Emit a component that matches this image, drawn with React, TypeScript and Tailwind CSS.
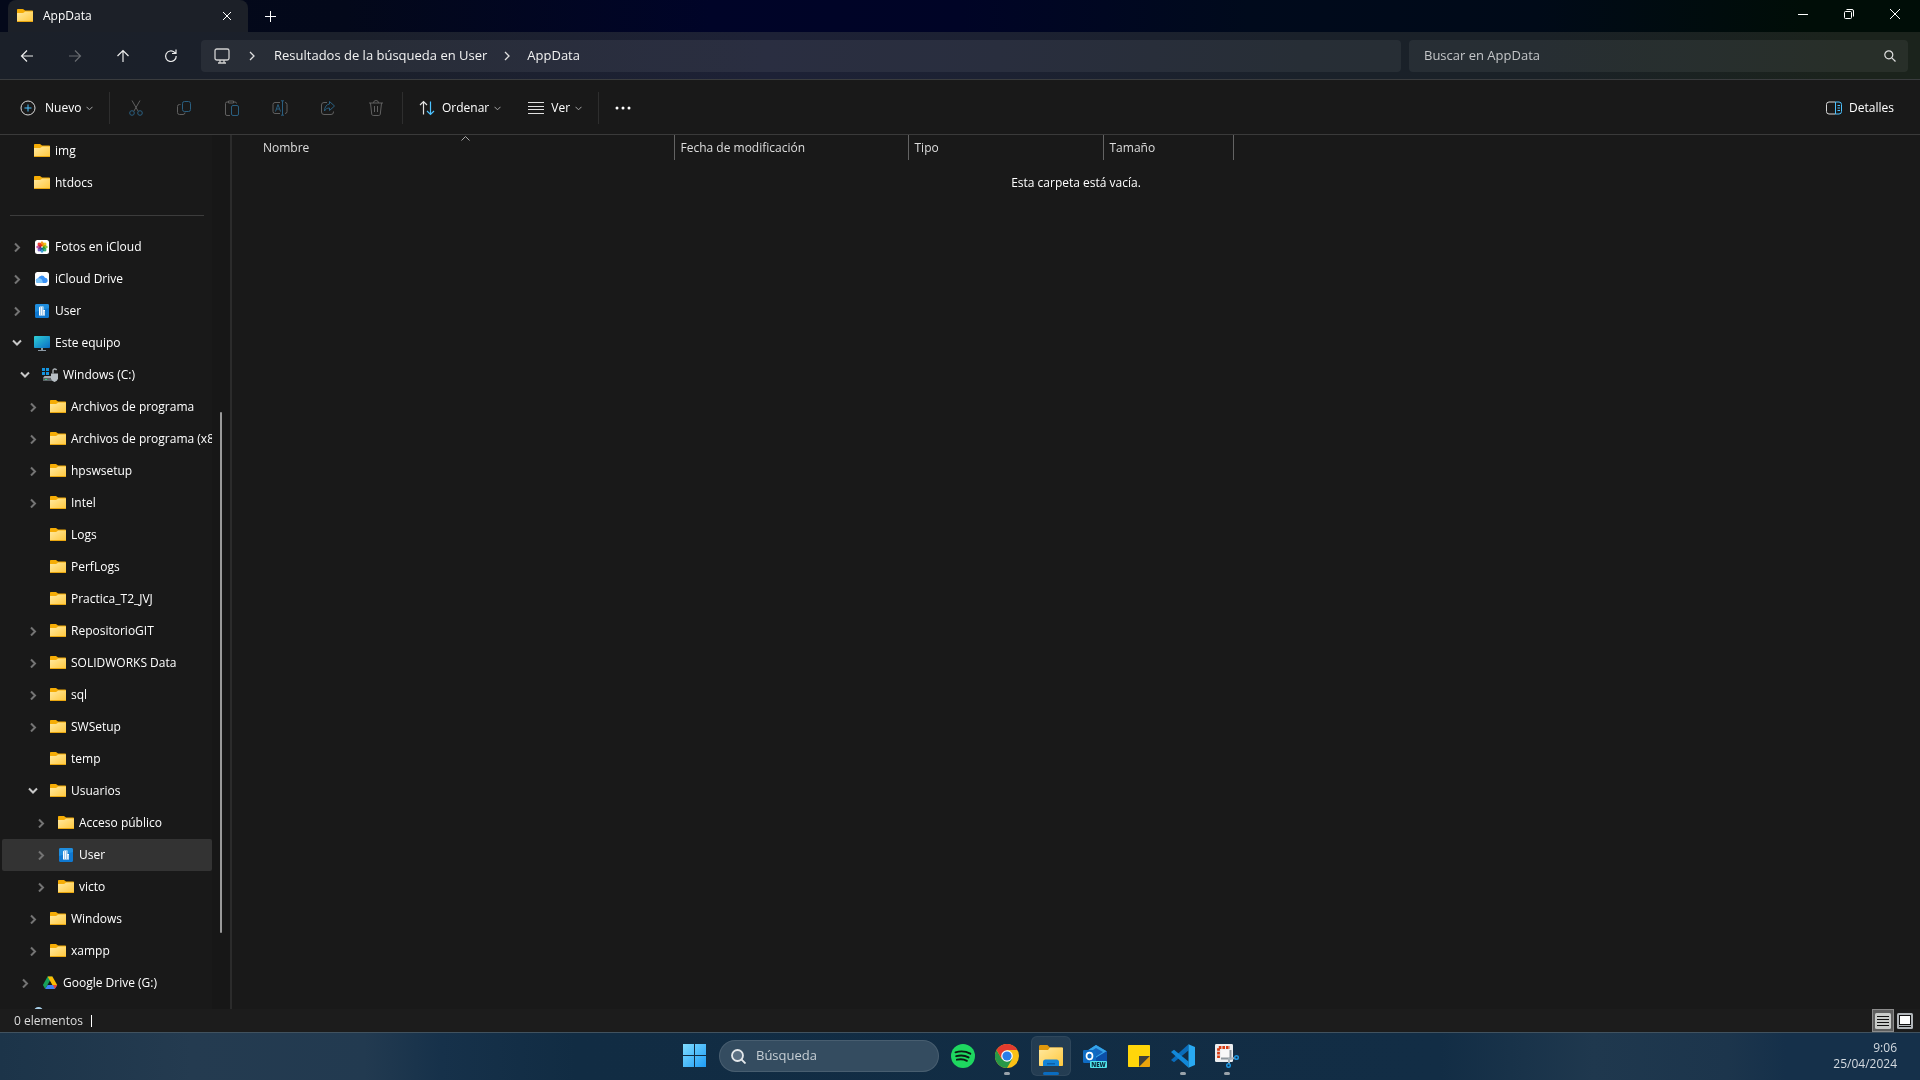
import type { ReactNode } from "react";

type IconName = "folder" | "photos" | "cloud" | "user" | "pc" | "drive" | "gdrive" | "network";

type TreeItem = {
  label: string;
  icon: IconName;
  depth: number;
  state?: "open" | "closed";
  selected?: boolean;
};

const PINNED: TreeItem[] = [
  { label: "img", icon: "folder", depth: 0 },
  { label: "htdocs", icon: "folder", depth: 0 },
];

const TREE: TreeItem[] = [
  { label: "Fotos en iCloud", icon: "photos", depth: 0, state: "closed" },
  { label: "iCloud Drive", icon: "cloud", depth: 0, state: "closed" },
  { label: "User", icon: "user", depth: 0, state: "closed" },
  { label: "Este equipo", icon: "pc", depth: 0, state: "open" },
  { label: "Windows (C:)", icon: "drive", depth: 1, state: "open" },
  { label: "Archivos de programa", icon: "folder", depth: 2, state: "closed" },
  { label: "Archivos de programa (x86)", icon: "folder", depth: 2, state: "closed" },
  { label: "hpswsetup", icon: "folder", depth: 2, state: "closed" },
  { label: "Intel", icon: "folder", depth: 2, state: "closed" },
  { label: "Logs", icon: "folder", depth: 2 },
  { label: "PerfLogs", icon: "folder", depth: 2 },
  { label: "Practica_T2_JVJ", icon: "folder", depth: 2 },
  { label: "RepositorioGIT", icon: "folder", depth: 2, state: "closed" },
  { label: "SOLIDWORKS Data", icon: "folder", depth: 2, state: "closed" },
  { label: "sql", icon: "folder", depth: 2, state: "closed" },
  { label: "SWSetup", icon: "folder", depth: 2, state: "closed" },
  { label: "temp", icon: "folder", depth: 2 },
  { label: "Usuarios", icon: "folder", depth: 2, state: "open" },
  { label: "Acceso público", icon: "folder", depth: 3, state: "closed" },
  { label: "User", icon: "user", depth: 3, state: "closed", selected: true },
  { label: "victo", icon: "folder", depth: 3, state: "closed" },
  { label: "Windows", icon: "folder", depth: 2, state: "closed" },
  { label: "xampp", icon: "folder", depth: 2, state: "closed" },
  { label: "Google Drive (G:)", icon: "gdrive", depth: 1, state: "closed" },
];

const INDENT = ["pl-1.5", "pl-3.5", "pl-[22px]", "pl-[30px]"];

/* ---------- tree icons ---------- */

function FolderIcon() {
  return (
    <svg width="16" height="16" viewBox="0 0 16 16" className="shrink-0">
      <defs>
        <linearGradient id="folder" x1="0" y1="0" x2="1" y2="1">
          <stop offset="0" stopColor="#ffe9a0" />
          <stop offset="1" stopColor="#ffc83d" />
        </linearGradient>
      </defs>
      <path d="M0 2C0 1.400.5 1 1 1h4.600c.5 0 .9.200 1.200.500L8 2.500h7c.6 0 1 .4 1 1V8H0z" fill="#f5ac05" />
      <path d="M0 5h5.800c.5 0 .9-.2 1.200-.5L8 3.500h8v9.700c0 .5-.4.8-.8.8H.8c-.4 0-.8-.3-.8-.8z" fill="url(#folder)" />
      <path d="M0 13h16c0 .6-.4 1-1 1H1c-.6 0-1-.4-1-1z" fill="#e9a60f" />
    </svg>
  );
}

const PETALS = ["#f7941d", "#f5c518", "#8cc63f", "#39b577", "#3f9fd8", "#7b68c8", "#c958a0", "#ee4036"];

function TreeIcon({ name }: { name: IconName }) {
  if (name === "folder") return <FolderIcon />;
  if (name === "photos")
    return (
      <svg width="16" height="16" viewBox="0 0 16 16" className="shrink-0">
        <rect x="1" y="1" width="14" height="14" rx="2.500" fill="#fff" />
        {PETALS.map((c, i) => (
          <ellipse
            key={c}
            cx="8"
            cy="4.800"
            rx="1.700"
            ry="2.600"
            fill={c}
            className="mix-blend-multiply"
            transform={`rotate(${i * 45} 8 8)`}
          />
        ))}
      </svg>
    );
  if (name === "cloud")
    return (
      <svg width="16" height="16" viewBox="0 0 16 16" className="shrink-0">
        <rect x="1" y="1" width="14" height="14" rx="2.500" fill="#fff" />
        <path d="M4 12a2.200 2.200 0 0 1 0-4.400A3.700 3.700 0 0 1 11 6.800 2.700 2.700 0 0 1 12 12z" fill="#3b93f7" />
        <path d="M4 12a2.200 2.200 0 0 1 0-4.400c2-.8 4 .4 4.400 2.400L9 12z" fill="#7cc5fb" />
      </svg>
    );
  if (name === "user")
    return (
      <svg width="16" height="16" viewBox="0 0 16 16" className="shrink-0">
        <rect x="1" y="1" width="14" height="14" rx="1.500" fill="#0f78d0" />
        <path d="M1 2.500C1 1.700 1.700 1 2.500 1h11c.8 0 1.500.7 1.500 1.500V5L1 9z" fill="#2a9be6" fillOpacity="0.600" />
        <path d="M5 4.500L6 3.500h3.500V7H11v5.500H5z" fill="#fff" />
        <path
          d="M6.200 5h.9M8.200 5h.9M6.200 7h.9M8.200 7h.9M6.200 9h.9M8.200 9h.9M6.200 11h.9M8.200 11h.9M9.800 9h.7M9.800 11h.7"
          stroke="#1478cc"
        />
      </svg>
    );
  if (name === "pc")
    return (
      <svg width="16" height="16" viewBox="0 0 16 16" className="shrink-0">
        <defs>
          <linearGradient id="pc" x1="0" y1="0" x2="1" y2="1">
            <stop offset="0" stopColor="#2fd0d6" />
            <stop offset="1" stopColor="#0a6cc4" />
          </linearGradient>
        </defs>
        <rect x="0" y="1" width="16" height="12" rx="0.800" fill="url(#pc)" />
        <path d="M7 13h2v2h3v1H4v-1h3z" fill="#8d9aa5" />
      </svg>
    );
  if (name === "drive")
    return (
      <svg width="16" height="16" viewBox="0 0 16 16" className="shrink-0">
        <path d="M0 1h3v3H0zM4 1h3v3H4zM0 5h3v3H0zM4 5h3v3H4z" fill="#1595e0" />
        <path d="M1 11l1.500-2H14v3H1z" fill="#a4aaae" />
        <path d="M1 11h14v3H1z" fill="#5c6367" />
        <path d="M3 12h2v1H3z" fill="#34d47a" />
        <path d="M11 6.500V3.500c0-1.600 2.800-2.200 3.600-.4" stroke="#a9afb3" strokeWidth="1.400" fill="none" />
        <path d="M9 6.500h7v5c0 1-1.200 2.500-3.500 3.500C10.200 14 9 12.500 9 11.500z" fill="#b7bec4" />
      </svg>
    );
  if (name === "gdrive")
    return (
      <svg width="16" height="16" viewBox="0 0 16 16" className="shrink-0">
        <path d="M5.600 1.500h4.800L8 5.600 3.200 14 .9 10z" fill="#18a05a" />
        <path d="M5.600 1.500h4.800L15.200 10h-4.800z" fill="#fbbc04" />
        <path d="M3.200 14 5.600 10h9.600L12.800 14z" fill="#3f83f5" />
        <path d="M10.900 10h4.300L12.800 14z" fill="#ea4335" />
      </svg>
    );
  return (
    <svg width="16" height="16" viewBox="0 0 16 16" className="shrink-0">
      <circle cx="4.500" cy="4.500" r="4.500" fill="#a8d0ea" />
      <path d="M5 6h11v8H5z" fill="#1b86d0" />
    </svg>
  );
}

function TreeRow({ item }: { item: TreeItem }) {
  return (
    <li className="shrink-0">
      <button
        type="button"
        className={`flex h-8 w-full items-center overflow-hidden rounded-xs ${INDENT[item.depth]} ${item.selected ? "bg-[#333333]" : ""}`}
      >
        <span className="flex w-[17px] shrink-0 justify-center">
          {item.state === "open" && (
            <svg width="10" height="10" viewBox="0 0 10 10" fill="none" stroke="#c8c8c8" strokeWidth="2">
              <path d="M1 2.500l4 4 4-4" />
            </svg>
          )}
          {item.state === "closed" && (
            <svg width="10" height="10" viewBox="0 0 10 10" fill="none" stroke="#747474" strokeWidth="2">
              <path d="M3 1.500l4 4-4 4" />
            </svg>
          )}
        </span>
        <span className="mr-[5px] ml-[9px]">
          <TreeIcon name={item.icon} />
        </span>
        <span className="whitespace-nowrap">{item.label}</span>
      </button>
    </li>
  );
}

/* ---------- window chrome ---------- */

function TitleBar() {
  return (
    <header className="flex h-8 shrink-0 items-center bg-[linear-gradient(90deg,#04091a_0%,#03081a_18%,#000428_37%,#000426_50%,#000a1c_65%,#000a18_80%,#000d07_94%)] pr-0.5 pl-2">
      <div className="flex h-full w-60 items-center rounded-t-lg bg-[#1c2028] pr-4 pl-[9px]">
        <FolderIcon />
        <span className="ml-2.5 flex-1 text-xs text-white">AppData</span>
        <button type="button" aria-label="Cerrar pestaña" className="text-white">
          <svg width="10" height="10" viewBox="0 0 10 10" stroke="currentColor">
            <path d="M1 1l8 8M9 1L1 9" />
          </svg>
        </button>
      </div>
      <button type="button" aria-label="Nueva pestaña" className="flex h-8 w-11 items-center justify-center text-white">
        <svg width="11" height="11" viewBox="0 0 11 11" stroke="currentColor">
          <path d="M5.500 0v11M0 5.500h11" />
        </svg>
      </button>
      <div className="ml-auto flex pb-1 text-white">
        <button type="button" aria-label="Minimizar" className="flex h-7 w-[46px] items-center justify-center">
          <svg width="10" height="10" viewBox="0 0 10 10" stroke="currentColor">
            <path d="M0 5.500h10" />
          </svg>
        </button>
        <button type="button" aria-label="Restaurar" className="flex h-7 w-[46px] items-center justify-center">
          <svg width="10" height="10" viewBox="0 0 10 10" fill="none" stroke="currentColor">
            <rect x="0.500" y="2.500" width="7" height="7" rx="1" />
            <path d="M2.500.5H8A1.500 1.500 0 0 1 9.500 2v5.500" />
          </svg>
        </button>
        <button type="button" aria-label="Cerrar" className="flex h-7 w-[46px] items-center justify-center">
          <svg width="10" height="10" viewBox="0 0 10 10" stroke="currentColor">
            <path d="M0 0l10 10M10 0L0 10" />
          </svg>
        </button>
      </div>
    </header>
  );
}

function NavButton({ label, dim, children }: { label: string; dim?: boolean; children: ReactNode }) {
  return (
    <button
      type="button"
      aria-label={label}
      disabled={dim}
      className={`flex size-8 items-center justify-center ${dim ? "text-[#686b70]" : "text-[#ececec]"}`}
    >
      <svg width="16" height="16" viewBox="0 0 16 16" fill="none" stroke="currentColor" strokeWidth="1.200">
        {children}
      </svg>
    </button>
  );
}

function CrumbArrow() {
  return (
    <svg width="6" height="10" viewBox="0 0 6 10" fill="none" stroke="#e0e0e0" strokeWidth="1.300" className="shrink-0">
      <path d="M1 1l4 4-4 4" />
    </svg>
  );
}

function AddressBar() {
  return (
    <div className="flex h-12 shrink-0 items-center border-b border-[#3a3c3e] bg-[linear-gradient(90deg,#1b2029_0%,#1b202b_18%,#1d2136_40%,#1c2132_52%,#1a212a_68%,#1a2127_80%,#1b231c_96%)] pt-px pr-3 pl-[11px]">
      <nav className="flex gap-4 pr-3.5" aria-label="Historial">
        <NavButton label="Atrás">
          <path d="M14 8H2.500M8 2.500L2.500 8 8 13.500" />
        </NavButton>
        <NavButton label="Adelante" dim>
          <path d="M2 8h11.500M8 2.500L13.500 8 8 13.500" />
        </NavButton>
        <NavButton label="Subir">
          <path d="M8 14V2.500M2.500 8L8 2.500 13.500 8" />
        </NavButton>
        <NavButton label="Actualizar">
          <path d="M13.200 8A5.300 5.300 0 1 1 11.500 4.300L13 5.500M13 1.500v4H9" />
        </NavButton>
      </nav>
      <div className="flex h-8 flex-1 items-center rounded-sm bg-white/6 pl-[13px] text-[13px] text-[#f2f2f2]">
        <svg width="16" height="16" viewBox="0 0 16 16" fill="none" stroke="#d0d0d0" strokeWidth="1.300">
          <rect x="1" y="1" width="14" height="11" rx="1.800" />
          <path d="M6 12v2.500M10 12v2.500M4 15h8" />
        </svg>
        <span className="flex w-11 justify-center">
          <CrumbArrow />
        </span>
        <a href="#resultados">Resultados de la búsqueda en User</a>
        <span className="flex w-10 justify-center">
          <CrumbArrow />
        </span>
        <a href="#appdata">AppData</a>
      </div>
      <label className="ml-2 flex h-8 w-[499px] items-center rounded-sm bg-white/6 pr-3 pl-[15px]">
        <input
          type="text"
          aria-label="Buscar en AppData"
          placeholder="Buscar en AppData"
          className="min-w-0 flex-1 bg-transparent text-[13px] text-white outline-none placeholder:text-[#c4c6c8]"
        />
        <svg width="12" height="12" viewBox="0 0 12 12" fill="none" stroke="#e0e0e0" strokeWidth="1.200">
          <circle cx="4.800" cy="4.800" r="4" />
          <path d="M7.800 7.800L11.500 11.500" />
        </svg>
      </label>
    </div>
  );
}

function Caret() {
  return (
    <svg width="7" height="5" viewBox="0 0 7 5" fill="none" stroke="#a8a8a8" className="ml-[5px]">
      <path d="M.5.800l3 3 3-3" />
    </svg>
  );
}

function Divider() {
  return <span className="h-8 w-px bg-[#2e2e2e]" />;
}

function Tool({ label, children }: { label: string; children: ReactNode }) {
  return (
    <button type="button" aria-label={label} disabled className="flex h-8 w-12 items-center justify-center">
      <svg width="16" height="16" viewBox="0 0 16 16" fill="none" stroke="#606060">
        {children}
      </svg>
    </button>
  );
}

function Toolbar() {
  return (
    <div className="flex h-[55px] shrink-0 items-center border-b border-[#3a3a3a] bg-[#191919] pt-0.5 pr-[26px] text-xs text-white">
      <button type="button" className="flex w-[109px] items-center pl-5">
        <svg width="16" height="16" viewBox="0 0 16 16" fill="none" stroke="#d8d8d8">
          <circle cx="8" cy="8" r="7" />
          <path d="M8 4.500v7M4.500 8h7" stroke="#4cc2ff" />
        </svg>
        <span className="ml-[9px]">Nuevo</span>
        <Caret />
      </button>
      <Divider />
      <div className="flex px-0.5">
        <Tool label="Cortar">
          <path d="M4 .5l6.200 10.800M12 .5L5.800 11.300" />
          <circle cx="4" cy="13" r="2.300" stroke="#2a5f80" />
          <circle cx="12" cy="13" r="2.300" stroke="#2a5f80" />
        </Tool>
        <Tool label="Copiar">
          <path d="M4.500 4.500H3.500a2 2 0 0 0-2 2v6a2 2 0 0 0 2 2h3.500a2 2 0 0 0 2-2" />
          <rect x="6.500" y="1.500" width="8" height="10" rx="2" stroke="#2a5f80" />
        </Tool>
        <Tool label="Pegar">
          <path d="M6 15.500H3A1.500 1.500 0 0 1 1.500 14V3.500A1.500 1.500 0 0 1 3 2h1.500M9.500 2H11A1.500 1.500 0 0 1 12.500 3.500M4.500 1h5v2h-5z" />
          <rect x="7.500" y="5.500" width="7" height="10" rx="1.500" stroke="#2a5f80" />
        </Tool>
        <Tool label="Cambiar nombre">
          <path d="M8 2.500H3a2 2 0 0 0-2 2v7a2 2 0 0 0 2 2h5M13 2.500a2 2 0 0 1 2 2v7a2 2 0 0 1-2 2" />
          <path d="M3.500 11.500L6 4.500l2.500 7M4.500 9h3M10.500 1v14M9 .8h3M9 15.200h3" stroke="#2a5f80" />
        </Tool>
        <Tool label="Compartir">
          <path d="M7 2.500H4a2.500 2.500 0 0 0-2.500 2.500v7A2.500 2.500 0 0 0 4 14.500h7a2.500 2.500 0 0 0 2.500-2.500v-.5" />
          <path d="M9.500 1.500l5 4.500-5 4.500V8C7 8 5.500 9 4.500 11c0-4 2-6.500 5-7z" stroke="#2a5f80" />
        </Tool>
        <Tool label="Eliminar">
          <path d="M1 3h14M5.500 3a2.500 2.500 0 0 1 5 0M2.500 3l1.200 11c.1.900.7 1.500 1.500 1.500h5.600c.8 0 1.400-.6 1.500-1.500L13.500 3M6.500 6v6M9.500 6v6" />
        </Tool>
      </div>
      <Divider />
      <button type="button" className="flex items-center pl-4">
        <svg width="16" height="16" viewBox="0 0 16 16" fill="none" strokeWidth="1.200">
          <path d="M4.500 14.500V1.500M1 5l3.500-3.500L8 5" stroke="#e0e0e0" />
          <path d="M11.500 1.500v13M8 11l3.500 3.500L15 11" stroke="#4cc2ff" />
        </svg>
        <span className="ml-[7px]">Ordenar</span>
        <Caret />
      </button>
      <button type="button" className="ml-[27px] flex items-center pr-4">
        <svg width="16" height="16" viewBox="0 0 16 16" stroke="#e0e0e0">
          <path d="M0 2.500h16M0 6.500h16M0 9.500h16M0 13.500h16" />
        </svg>
        <span className="ml-[7px]">Ver</span>
        <Caret />
      </button>
      <Divider />
      <button type="button" aria-label="Ver más" className="flex h-8 w-12 items-center justify-center">
        <svg width="16" height="4" viewBox="0 0 16 4" fill="#fff">
          <circle cx="2" cy="2" r="1.500" />
          <circle cx="8" cy="2" r="1.500" />
          <circle cx="14" cy="2" r="1.500" />
        </svg>
      </button>
      <button type="button" className="ml-auto flex items-center">
        <svg width="16" height="14" viewBox="0 0 16 14" fill="none">
          <path d="M9.500 1H3A2.500 2.500 0 0 0 .5 3.500v7A2.500 2.500 0 0 0 3 13h6.500" stroke="#d8d8d8" />
          <path d="M9.500 1H13a2.500 2.500 0 0 1 2.500 2.500v7A2.500 2.500 0 0 1 13 13H9.500zM11.500 4.500h2.500M11.500 7h2.500M11.500 9.500h2.500" stroke="#4cc2ff" />
        </svg>
        <span className="ml-[7px]">Detalles</span>
      </button>
    </div>
  );
}

/* ---------- body ---------- */

function Sidebar() {
  return (
    <aside className="flex w-[232px] shrink-0 border-r-2 border-[#2b2b2b] bg-[#191919] pl-0.5 text-xs text-white">
      <ul className="flex w-[210px] flex-col overflow-hidden">
        {PINNED.map((item) => (
          <TreeRow key={item.label} item={item} />
        ))}
        <li className="flex h-8 shrink-0 items-center px-2">
          <hr className="w-full border-[#3c3c3c]" />
        </li>
        {TREE.map((item, i) => (
          <TreeRow key={i} item={item} />
        ))}
        {/* next root node, only its top edge shows above the status bar */}
        <li className="flex h-8 shrink-0 items-center pl-8" aria-label="Red">
          <TreeIcon name="network" />
        </li>
      </ul>
      <div className="flex flex-1 flex-col items-center bg-[#171717]">
        <span className="flex-[277]" />
        <span className="w-0.5 flex-[520] rounded-full bg-[#9a9a9a]" />
        <span className="flex-[76]" />
      </div>
    </aside>
  );
}

const COLUMNS = [
  { label: "Fecha de modificación", width: "w-[234px]" },
  { label: "Tipo", width: "w-[195px]" },
  { label: "Tamaño", width: "w-[130px]" },
];

function FileList() {
  return (
    <main className="min-w-0 flex-1 bg-[#191919] text-xs">
      <table className="w-full table-fixed">
        <thead>
          <tr className="h-[25px] text-left text-[#dedede]">
            <th className="w-[442px] border-r border-[#636363] p-0 pl-6 font-normal">
              <div className="relative pl-[7px]">
                Nombre
                <svg width="9" height="5" viewBox="0 0 9 5" fill="none" stroke="#a8a8a8" className="absolute -top-1 left-[205px]">
                  <path d="M.5 4.500l4-4 4 4" />
                </svg>
              </div>
            </th>
            {COLUMNS.map((c) => (
              <th key={c.label} className={`${c.width} border-r border-[#636363] p-0 pl-1.5 font-normal`}>
                {c.label}
              </th>
            ))}
            <th aria-hidden="true" />
          </tr>
        </thead>
        <tbody>
          <tr>
            <td colSpan={5} className="pt-[15px] text-center text-white">
              Esta carpeta está vacía.
            </td>
          </tr>
        </tbody>
      </table>
    </main>
  );
}

function StatusBar() {
  return (
    <footer className="flex h-[23px] shrink-0 items-center bg-[#1c1c1c] pr-[7px] pl-3.5 text-xs text-[#dedede]">
      <span>0 elementos</span>
      <span className="ml-2 h-3 w-px bg-white" />
      <div className="ml-auto flex items-center gap-[3px]">
        <button type="button" aria-label="Vista de detalles" className="flex h-[23px] w-[22px] items-center justify-center border border-[#8c8c8c] bg-[#5f5f5f]">
          <svg width="16" height="16" viewBox="0 0 16 16">
            <rect width="16" height="16" rx="1.500" fill="#c9cbc9" />
            <path d="M2 3.500h12M2 6.500h12M2 9.500h12M2 12.500h12" stroke="#111" />
          </svg>
        </button>
        <button type="button" aria-label="Vista de iconos grandes">
          <svg width="16" height="16" viewBox="0 0 16 16">
            <rect width="16" height="16" rx="1.500" fill="#b2b6ba" />
            <rect x="2.500" y="2.500" width="11" height="9" fill="#fff" stroke="#111" />
            <path d="M2 13.500h12" stroke="#111" />
          </svg>
        </button>
      </div>
    </footer>
  );
}

/* ---------- taskbar ---------- */

function TaskButton({ label, running, active, children }: { label: string; running?: boolean; active?: boolean; children: ReactNode }) {
  return (
    <button type="button" aria-label={label} className="flex w-11 justify-center">
      <span className={`relative flex size-10 items-center justify-center rounded-md border ${active ? "border-white/5 bg-white/8" : "border-transparent"}`}>
        <svg width="24" height="24" viewBox="0 0 24 24">{children}</svg>
        {running && <span className="absolute bottom-0 h-[3px] w-1.5 rounded-full bg-[#9aa3ab]" />}
        {active && <span className="absolute bottom-0 h-[3px] w-4 rounded-full bg-[#0a6cc0]" />}
      </span>
    </button>
  );
}

function Taskbar() {
  return (
    <div className="grid h-12 shrink-0 grid-cols-[1fr_auto_1fr] items-center border-t border-[#41525f] bg-[linear-gradient(90deg,#1c3449_0%,#243b50_10%,#223a50_19%,#16314a_23%,#112c43_30%,#122d45_75%,#1f384e_83%,#1c354c_90%,#15304a_93%)] pb-px">
      <span />
      <div className="flex items-center pl-0.5">
        <TaskButton label="Inicio">
          <defs>
            <linearGradient id="win" x1="0" y1="0" x2="1" y2="1">
              <stop offset="0" stopColor="#7fdcff" />
              <stop offset="1" stopColor="#1e9cf5" />
            </linearGradient>
          </defs>
          <path d="M0 0h11v11H0zM12 0h11v11H12zM0 12h11v11H0zM12 12h11v11H12z" fill="url(#win)" />
        </TaskButton>
        <label className="mx-0.5 flex h-8 w-[220px] items-center rounded-full border border-white/10 bg-[#344c60] pl-[11px]">
          <svg width="15" height="15" viewBox="0 0 15 15" fill="none" stroke="#e4e8eb" strokeWidth="1.800">
            <circle cx="6.500" cy="6.500" r="5.500" fill="#5b7083" />
            <path d="M10.500 10.500l4 4" />
          </svg>
          <input
            type="text"
            aria-label="Búsqueda"
            placeholder="Búsqueda"
            className="ml-2.5 w-40 bg-transparent text-[13px] text-white outline-none placeholder:text-[#c6ced4]"
          />
        </label>
        <TaskButton label="Spotify">
          <circle cx="12" cy="12" r="12" fill="#1ed760" />
          <path
            d="M4.500 8.300c5-1.500 10.500-1 14.800 1.400M5.200 12.200c4.200-1.200 8.800-.8 12.400 1.200M5.900 15.700c3.500-.9 7-.6 10 1.100"
            stroke="#0c1a12"
            strokeWidth="1.900"
            strokeLinecap="round"
            fill="none"
          />
        </TaskButton>
        <TaskButton label="Chrome" running>
          <circle cx="12" cy="12" r="12" fill="#fbc116" />
          <path d="M1.600 6A12 12 0 0 0 12 24l5.200-9L12 12 6.800 15z" fill="#279847" />
          <path d="M1.600 6A12 12 0 0 1 22.400 6H12L6.800 15z" fill="#e33b2e" />
          <circle cx="12" cy="12" r="5.800" fill="#fff" />
          <circle cx="12" cy="12" r="4.600" fill="#2a7de9" />
        </TaskButton>
        <TaskButton label="Explorador de archivos" active>
          <path d="M0 2.500C0 1.700.6 1 1.400 1h7L11 3.500h11.500c.8 0 1.500.7 1.500 1.500v5H0z" fill="#e0980c" />
          <path d="M0 6h9l2-2.500h12c.6 0 1 .4 1 1V21c0 .6-.4 1-1 1H1c-.6 0-1-.4-1-1z" fill="url(#folder)" />
          <path d="M4 22v-4a2.500 2.500 0 0 1 2.500-2.500h11A2.500 2.500 0 0 1 20 18v4z" fill="#1484d8" />
          <path d="M8 19h8v1.500H8z" fill="#0d5fa8" />
        </TaskButton>
        <TaskButton label="Outlook">
          <path d="M3 7.500L13 1l11 6.500V19H3z" fill="#1a7fd4" />
          <path d="M13 1l11 6.500-11 6.500L3 7.500z" fill="#35a4ea" />
          <path d="M14 13L24 7v12H8z" fill="#0c4fa8" />
          <path d="M13 4l7 4-7 4.500L7 8z" fill="#1565bd" />
          <rect x="0" y="6" width="13" height="13" rx="1.200" fill="#0f6cc4" />
          <ellipse cx="6.500" cy="12" rx="3" ry="3.400" fill="none" stroke="#fff" strokeWidth="1.700" />
          <rect x="7" y="17" width="17" height="7" rx="1" fill="#4fe3ea" />
          <text x="15.500" y="23" textAnchor="middle" fontSize="6" fontWeight="800" fill="#0a2a3c">NEW</text>
        </TaskButton>
        <TaskButton label="Notas rápidas">
          <path d="M1 2c0-.6.4-1 1-1h20c.6 0 1 .4 1 1v10L12 23H2c-.6 0-1-.4-1-1z" fill="#ffd60a" />
          <path d="M12 12h11L12 23z" fill="#40413a" />
          <path d="M23 12v10c0 .6-.4 1-1 1H12z" fill="#eba40c" />
        </TaskButton>
        <TaskButton label="Visual Studio Code" running>
          <path d="M17.500.3v6.200L3 18.300 0 16z" fill="#0a6cba" />
          <path d="M17.500 23.700v-6.200L3 5.700 0 8z" fill="#1288d8" />
          <path d="M17.500.3L24 3v18l-6.500 2.700z" fill="#29a9f2" />
        </TaskButton>
        <TaskButton label="Recortes" running>
          <rect x="0" y="0" width="18" height="18" rx="1.200" fill="#eceef0" />
          <path d="M3.500 14V3.500H15" fill="none" stroke="#d83b12" strokeWidth="2.800" strokeDasharray="2.600 1" />
          <path d="M6 6h9v9H6z" fill="#f8f8f8" />
          <path d="M6 14.500h9.500V6" stroke="#8f989e" strokeWidth="2" fill="none" />
          <path d="M14 15l6-1M14 14v6" stroke="#a6b0b6" strokeWidth="2" />
          <circle cx="21.500" cy="13.500" r="1.800" fill="none" stroke="#1d95e0" strokeWidth="1.500" />
          <circle cx="13.500" cy="21.500" r="1.800" fill="none" stroke="#1d95e0" strokeWidth="1.500" />
        </TaskButton>
      </div>
      <time dateTime="2024-04-25T09:06" className="flex flex-col pr-[23px] text-right text-xs text-[#d4dae0]">
        <span>9:06</span>
        <span>25/04/2024</span>
      </time>
    </div>
  );
}

export default function App() {
  return (
    <div className="flex h-screen flex-col overflow-hidden bg-[#191919] font-['Open_Sans','Noto_Sans',sans-serif]">
      <TitleBar />
      <AddressBar />
      <Toolbar />
      <div className="flex min-h-0 flex-1">
        <Sidebar />
        <FileList />
      </div>
      <StatusBar />
      <Taskbar />
    </div>
  );
}
